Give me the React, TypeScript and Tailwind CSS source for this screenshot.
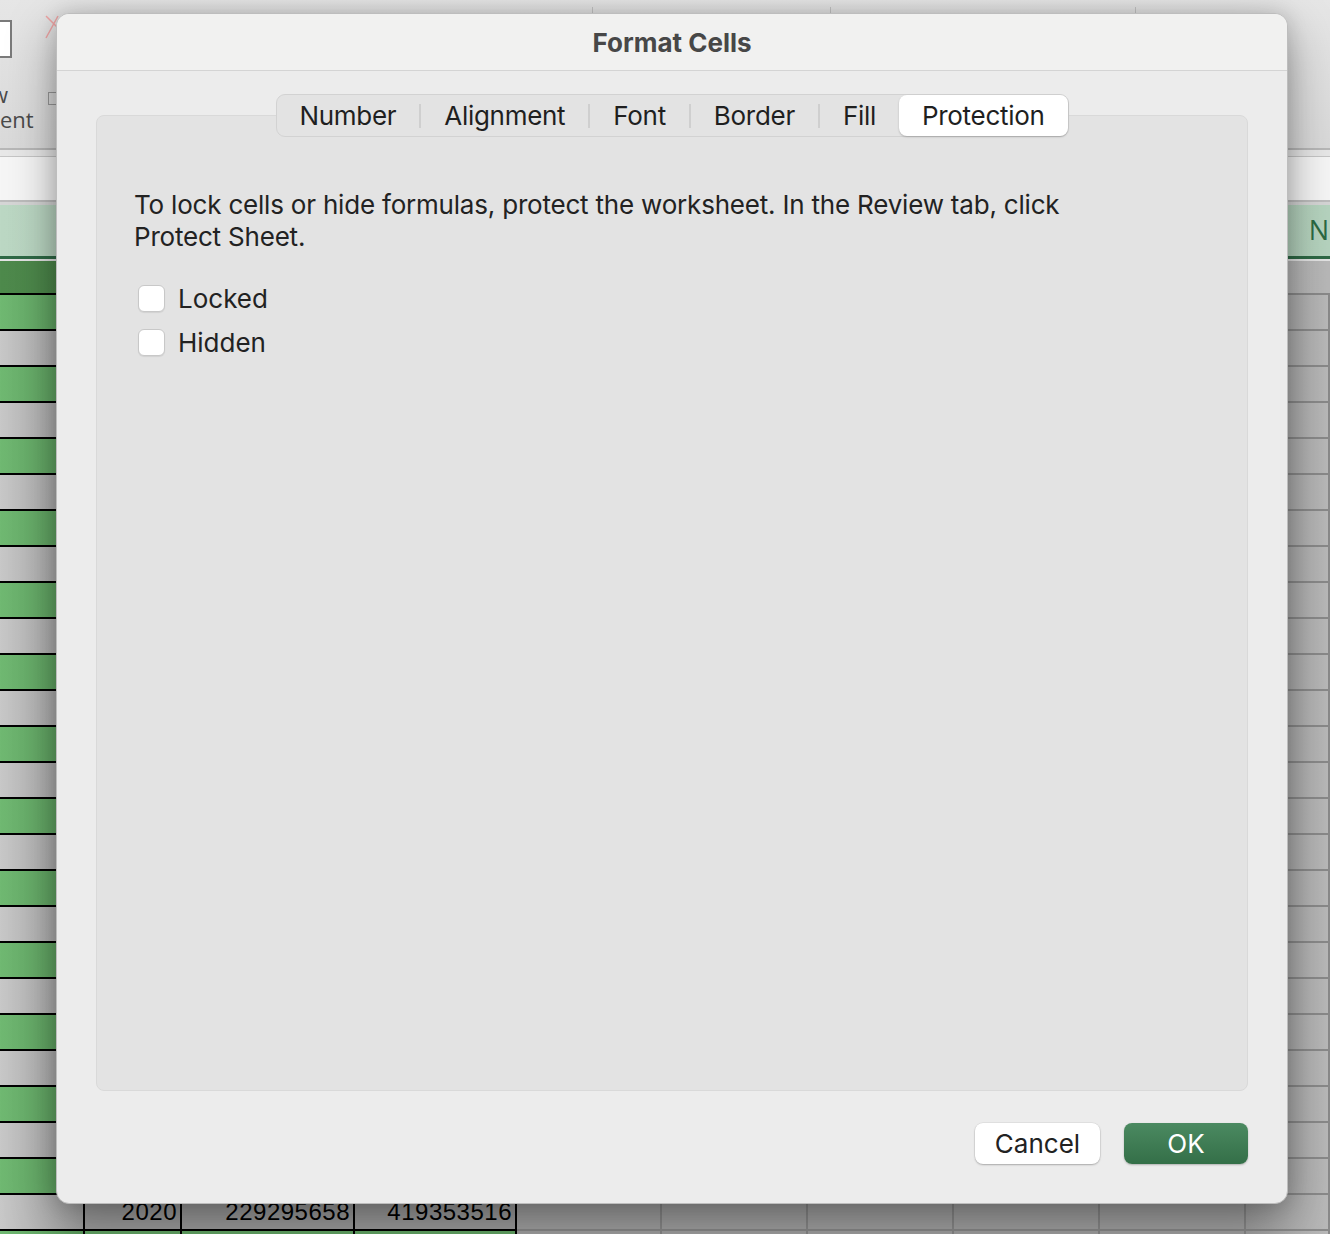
import React from "react";

const widths = [85, 97, 173, 162, 145, 146, 146, 146, 146, 84];

function cellClass(c: number, green: boolean) {
  if (c === 0) {
    return green
      ? "bg-gradient-to-r from-[#70b972] to-[#5c9e5e]"
      : "bg-gradient-to-r from-[#c8c8c8] to-[#a4a4a4]";
  }
  if (c < 4) return green ? "bg-[#64a866]" : "bg-[#9e9e9e]";
  if (c === 9) return "bg-gradient-to-r from-[#a2a2a2] to-[#b9b9b9]";
  return "bg-[#a3a3a3]";
}

function SheetRow({ idx }: { idx: number }) {
  const green = idx % 2 === 0;
  const isData = idx === 25;
  const texts = isData ? ["", "2020", "229295658", "419353516"] : [];
  return (
    <div className="flex h-[36px] shrink-0">
      {widths.map((w, c) => {
        const table = c < 4;
        return (
          <div
            key={c}
            style={{ width: w }}
            className={
              table
                ? `h-full shrink-0 border-t-2 border-r-2 border-black flex items-center justify-end pr-[3px] text-[24px] text-black ${cellClass(c, green)}`
                : `h-full shrink-0 border-t-2 border-r-2 border-[#8a8a8a] ${cellClass(c, green)}`
            }
          >
            {table && texts[c] ? (
              <span className="font-['Liberation_Sans',sans-serif] tracking-[0.5px]">{texts[c]}</span>
            ) : null}
          </div>
        );
      })}
    </div>
  );
}

function Tab({ label, selected }: { label: string; selected?: boolean }) {
  if (selected) {
    return (
      <div className="h-[41px] px-[23px] flex items-center rounded-[8px] bg-white shadow-[0_1px_2px_rgba(0,0,0,0.22)] text-[#1f1f1f]">
        {label}
      </div>
    );
  }
  return <div className="h-[41px] px-[23px] flex items-center text-[#1f1f1f]">{label}</div>;
}

function Sep() {
  return <div className="w-[2px] h-[24px] bg-[#cfcfcf]" />;
}

function Checkbox({ label }: { label: string }) {
  return (
    <div className="flex items-center h-[44px] pl-[4px]">
      <div className="w-[27px] h-[27px] rounded-[6px] bg-white border border-[#c8c8c8] shadow-[0_1px_1px_rgba(0,0,0,0.08)]" />
      <span className="ml-[13px] text-[26px] text-[#222]">{label}</span>
    </div>
  );
}

export default function App() {
  const rows = Array.from({ length: 27 }, (_, i) => i);
  return (
    <div className="relative w-[1330px] h-[1234px] overflow-hidden bg-[#a9a9a9] font-['Inter',sans-serif]">
      {/* Background spreadsheet */}
      <div className="flex flex-col w-full h-full">
        {/* Ribbon */}
        <div className="h-[148px] shrink-0 bg-gradient-to-b from-[#e6e6e6] to-[#dadada] flex flex-col">
          <div className="flex h-[14px] shrink-0">
            <div className="w-[592px] shrink-0" />
            <div className="w-[238px] shrink-0 border-l border-[#c4c4c4] mt-[7px]" />
            <div className="w-[305px] shrink-0 border-l border-[#c4c4c4] mt-[7px]" />
            <div className="flex-1 border-l border-[#c4c4c4] mt-[7px]" />
          </div>
          <div className="flex flex-1">
            <div className="w-[44px] shrink-0 flex flex-col">
              <div className="mt-[6px] w-[12px] h-[38px] bg-white border-2 border-l-0 border-[#7a7a7a]" />
              <div className="mt-[24px] -ml-[9px] text-[22px] leading-[25px] text-[#4a4a4a] font-['Open_Sans',sans-serif]">w</div>
              <div className="text-[22px] leading-[25px] text-[#4a4a4a] font-['Open_Sans',sans-serif]">ent</div>
            </div>
            <div className="w-[16px] shrink-0 flex flex-col">
              <svg width="16" height="26" viewBox="0 0 16 26">
                <path d="M2 2 L14 14 M14 2 L2 24" stroke="#f0a5a5" strokeWidth="1.5" fill="none" />
              </svg>
              <div className="mt-[52px] ml-[4px] w-[10px] h-[13px] border border-[#9a9a9a]" />
            </div>
          </div>
        </div>
        {/* Formula bar */}
        <div className="h-[57px] shrink-0 flex flex-col border-t-2 border-[#b8b8b8]">
          <div className="h-[7px] bg-[#e8e8e8] border-b border-[#c6c6c6]" />
          <div className="flex-1 bg-[#f6f6f6] border-b-2 border-[#bdbdbd]" />
          <div className="h-[3px] bg-[#d6d6d6]" />
        </div>
        {/* Column header */}
        <div className="h-[51px] shrink-0 bg-gradient-to-r from-[#bcd8c4] via-[#aacab4] to-[#b6d4bf] flex items-center justify-end">
          <span className="text-[27px] text-[#2b6a43] mr-[1px] font-['Open_Sans',sans-serif]">N</span>
        </div>
        <div className="h-[3px] shrink-0 bg-[#2f6a46]" />
        <div className="h-[2px] shrink-0 bg-[#e4e4e4]" />
        {/* first table row */}
        <div className="flex h-[32px] shrink-0">
          <div className="w-[517px] shrink-0 bg-gradient-to-r from-[#4e8a4c] to-[#3f733d] border-r-2 border-black" />
          <div className="flex-1 bg-gradient-to-r from-[#a8a8a8] to-[#b8b8b8]" />
        </div>
        {rows.map((i) => (
          <SheetRow key={i} idx={i} />
        ))}
      </div>

      {/* Dialog */}
      <div className="absolute left-[56px] top-[13px] w-[1232px] h-[1191px] rounded-[13px] bg-[#ececec] border border-[#bdbdbd] shadow-[0_18px_50px_rgba(0,0,0,0.35),0_0_20px_rgba(0,0,0,0.15)] flex flex-col overflow-hidden">
        <div className="h-[57px] shrink-0 bg-[#f1f1f0] border-b border-[#d4d4d4] flex items-center justify-center">
          <span className="text-[26px] font-bold text-[#474747] tracking-[0px]">Format Cells</span>
        </div>
        <div className="flex-1 flex flex-col px-[39px]">
          <div className="mt-[44px] h-[976px] shrink-0 rounded-[8px] bg-[#e3e3e3] border border-[#d9d9d9] flex flex-col">
            <div className="self-center -mt-[22px] h-[43px] flex items-center rounded-[9px] border border-[#d2d2d2] bg-[#e3e3e3] text-[26px] tracking-[-0.3px]">
              <Tab label="Number" />
              <Sep />
              <Tab label="Alignment" />
              <Sep />
              <Tab label="Font" />
              <Sep />
              <Tab label="Border" />
              <Sep />
              <Tab label="Fill" />
              <Tab label="Protection" selected />
            </div>
            <div className="pl-[37px] pt-[52px]">
              <p className="text-[26px] leading-[32px] text-[#222] tracking-[-0.2px]">
                To lock cells or hide formulas, protect the worksheet. In the Review tab, click
                <br />
                Protect Sheet.
              </p>
              <div className="mt-[23px] flex flex-col">
                <Checkbox label="Locked" />
                <Checkbox label="Hidden" />
              </div>
            </div>
          </div>
          <div className="mt-[32px] flex justify-end gap-[24px] text-[26px]">
            <button className="w-[125px] h-[41px] rounded-[8px] bg-white text-[#222] shadow-[0_1px_2px_rgba(0,0,0,0.25),0_0_0_0.5px_rgba(0,0,0,0.08)] flex items-center justify-center">
              Cancel
            </button>
            <button className="w-[124px] h-[41px] rounded-[8px] bg-gradient-to-b from-[#4b8a61] to-[#346f48] text-white shadow-[0_1px_2px_rgba(0,0,0,0.25)] flex items-center justify-center">
              OK
            </button>
          </div>
        </div>
      </div>
    </div>
  );
}
